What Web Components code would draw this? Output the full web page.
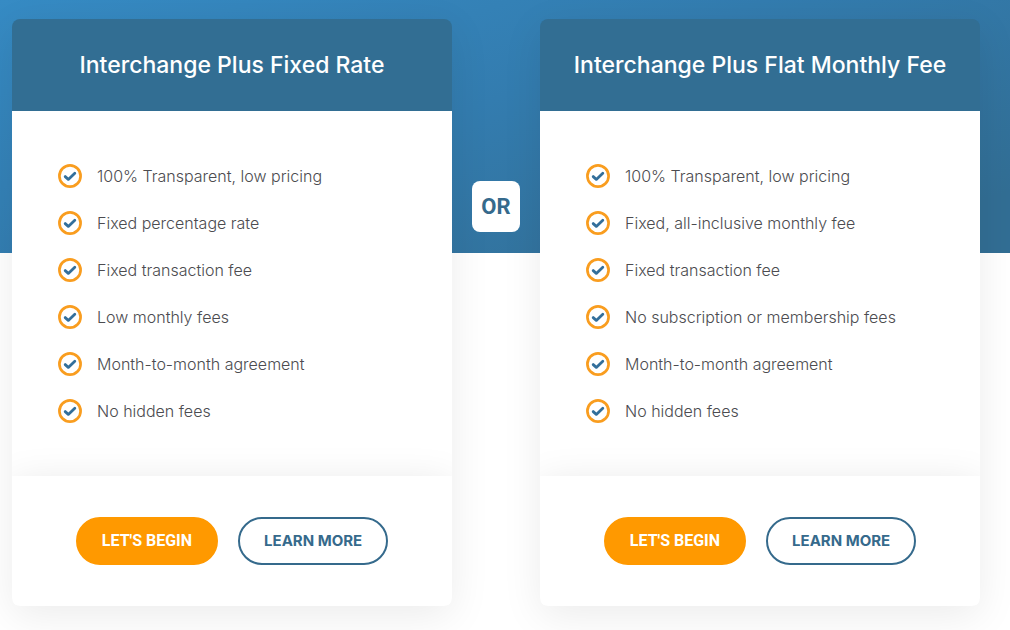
<!DOCTYPE html>
<html lang="en">
<head>
<meta charset="utf-8">
<meta name="viewport" content="width=device-width, initial-scale=1">
<title>Pricing plans</title>
<style>
  body { margin: 0; background: #fff; font-family: Inter, "Open Sans", sans-serif; }
</style>
</head>
<body>
<plan-compare>
  <plan-card slot="first">
    <span slot="title">Interchange Plus Fixed Rate</span>
    <plan-feature>100% Transparent, low pricing</plan-feature>
    <plan-feature>Fixed percentage rate</plan-feature>
    <plan-feature>Fixed transaction fee</plan-feature>
    <plan-feature>Low monthly fees</plan-feature>
    <plan-feature>Month-to-month agreement</plan-feature>
    <plan-feature>No hidden fees</plan-feature>
    <pill-button slot="actions">LET'S BEGIN</pill-button>
    <pill-button slot="actions" outline>LEARN MORE</pill-button>
  </plan-card>
  <plan-card slot="second">
    <span slot="title">Interchange Plus Flat Monthly Fee</span>
    <plan-feature>100% Transparent, low pricing</plan-feature>
    <plan-feature>Fixed, all-inclusive monthly fee</plan-feature>
    <plan-feature>Fixed transaction fee</plan-feature>
    <plan-feature>No subscription or membership fees</plan-feature>
    <plan-feature>Month-to-month agreement</plan-feature>
    <plan-feature>No hidden fees</plan-feature>
    <pill-button slot="actions">LET'S BEGIN</pill-button>
    <pill-button slot="actions" outline>LEARN MORE</pill-button>
  </plan-card>
</plan-compare>

<script>
  const define = (name, html) => {
    const template = document.createElement('template');
    template.innerHTML = html;
    customElements.define(name, class extends HTMLElement {
      constructor() {
        super();
        this.attachShadow({ mode: 'open' }).append(template.content.cloneNode(true));
      }
    });
  };

  define('plan-compare', `
    <style>
      :host {
        display: grid;
        grid-template-columns: minmax(0, 1fr) auto minmax(0, 1fr);
        column-gap: 20px;
        padding: 19px 30px 24px 12px;
        background: linear-gradient(160deg, #368bc4 0%, #337caf 45%, #326e94 90%) no-repeat top / 100% 253px;
      }
      .or {
        align-self: start;
        box-sizing: border-box;
        width: 48px;
        margin-top: 162px;
        padding: 12px 0;
        border-radius: 8px;
        background: #fff;
        color: #356a8c;
        font: 700 22px/27px Roboto, sans-serif;
        text-align: center;
        z-index: 1;
      }
    </style>
    <slot name="first"></slot>
    <div class="or">OR</div>
    <slot name="second"></slot>`);

  define('plan-card', `
    <style>
      :host {
        display: block;
        border-radius: 8px;
        box-shadow: 0 10px 40px rgba(0, 0, 0, .08);
      }
      article { border-radius: 8px; overflow: hidden; }
      h2 {
        margin: 0;
        padding: 30px 16px;
        background: #326e93;
        color: #fff;
        font-size: 23px;
        line-height: 32px;
        font-weight: 500;
        text-align: center;
      }
      .features {
        display: grid;
        gap: 23px;
        padding: 53px 46px;
        background: #fff;
      }
      footer {
        display: flex;
        justify-content: center;
        gap: 20px;
        padding: 41px 16px;
        background: #fff;
        box-shadow: 0 10px 40px rgba(0, 0, 0, .12);
      }
    </style>
    <article>
      <h2><slot name="title"></slot></h2>
      <div class="features" role="list"><slot></slot></div>
      <footer><slot name="actions"></slot></footer>
    </article>`);

  define('plan-feature', `
    <style>
      :host {
        display: flex;
        align-items: center;
        gap: 15px;
        color: #4c4c50;
        font-size: 16px;
        line-height: 24px;
        font-weight: 300;
      }
      svg { flex: none; }
    </style>
    <svg width="24" height="24" viewBox="0 0 24 24" fill="none" aria-hidden="true">
      <circle cx="12" cy="12" r="10.6" stroke="#f99d1f" stroke-width="2.7"/>
      <path d="M7.2 12.6 10.3 15.4 16.8 9.2" stroke="#336f9b" stroke-width="2.8" stroke-linecap="round" stroke-linejoin="round"/>
    </svg>
    <span role="listitem"><slot></slot></span>`);

  define('pill-button', `
    <style>
      :host { display: block; }
      button {
        height: 48px;
        padding: 0 24px;
        border: 2px solid #ff9900;
        border-radius: 24px;
        background: #ff9900;
        color: #fff;
        font: 700 16px/24px Roboto, sans-serif;
        white-space: nowrap;
        cursor: pointer;
      }
      :host([outline]) button {
        border-color: #356a8c;
        background: #fff;
        color: #356a8c;
        font: 700 15px/24px Inter, sans-serif;
      }
    </style>
    <button type="button"><slot></slot></button>`);
</script>
</body>
</html>
